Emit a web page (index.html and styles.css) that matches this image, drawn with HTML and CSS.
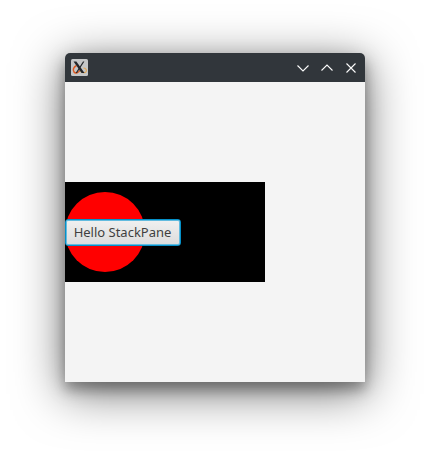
FILE: index.html
```html
<!DOCTYPE html>
<html lang="en">
<head>
<meta charset="utf-8">
<title>Hello StackPane</title>
<link rel="stylesheet" href="styles.css">
</head>
<body>
<div class="window">
  <header class="titlebar">
    <div class="app-icon">
      <svg width="17" height="17" viewBox="0 0 17 17">
        <rect width="17" height="17" rx="1.5" fill="#c4c6c7"/>
        <path d="M5.5 6.5C2.5 8 1.5 11 3 13C4.5 15 7.5 14 9.5 10.5" fill="none" stroke="#dd5a22" stroke-width="1.5"/>
        <path d="M9 11.5C10.5 14 14 14.5 15.2 12.5C16 11 14.5 9 12.5 9" fill="none" stroke="#e3a858" stroke-width="1.2"/>
        <path d="M2.5 2.5L5.4 2.5L13.5 14L10.6 14Z" fill="#23262a"/>
        <path d="M12 2.5L13.4 2.5L6 14L4.6 14Z" fill="#23262a"/>
      </svg>
    </div>
    <div class="controls">
      <svg width="12" height="12" viewBox="0 0 12 12"><path d="M.5 3.5L6 9L11.5 3.5"/></svg>
      <svg width="12" height="12" viewBox="0 0 12 12"><path d="M.5 8.5L6 3L11.5 8.5"/></svg>
      <svg width="12" height="12" viewBox="0 0 12 12"><path d="M1.5 1.5L10.5 10.5M10.5 1.5L1.5 10.5"/></svg>
    </div>
  </header>
  <main class="scene">
    <div class="stack">
      <div class="circle"></div>
      <button class="btn" type="button">Hello StackPane</button>
    </div>
  </main>
</div>
</body>
</html>
```
FILE: styles.css
```css
html, body {
  margin: 0;
  height: 100%;
  background: #fff;
  overflow: hidden;
}
body {
  padding: 53px 0 0 65px;
  box-sizing: border-box;
}
.window {
  width: 300px;
  border-radius: 5px 5px 0 0;
  box-shadow:
    0 10px 48px 2px rgba(0, 0, 0, .5),
    0 6px 20px rgba(0, 0, 0, .22),
    0 8px 12px rgba(0, 0, 0, .2);
}
.titlebar {
  height: 29px;
  background: #31363b;
  border-radius: 5px 5px 0 0;
  display: flex;
  align-items: center;
  justify-content: space-between;
  padding: 0 8px 0 6px;
  box-sizing: border-box;
}
.app-icon {
  display: flex;
}
.controls {
  display: flex;
  gap: 12px;
}
.controls svg {
  fill: none;
  stroke: #fcfcfc;
  stroke-width: 1.1;
}
.scene {
  height: 300px;
  background: #f4f4f4;
  display: flex;
  align-items: center;
}
.stack {
  width: 200px;
  height: 100px;
  background: #000;
  display: grid;
  align-items: center;
  justify-items: start;
}
.circle, .btn {
  grid-area: 1 / 1;
}
.circle {
  width: 80px;
  height: 80px;
  border-radius: 50%;
  background: #f00;
}
.btn {
  position: relative;
  width: 116px;
  height: 27px;
  margin: 0;
  padding: 0 1px 0 0;
  box-sizing: border-box;
  border: 1px solid #0590c8;
  border-radius: 3px;
  background: linear-gradient(#f0f0f0, #dcdcdc);
  box-shadow: inset 0 0 0 1px #62bbdf;
  color: #3f3f3f;
  font: 13px "Noto Sans", sans-serif;
  text-align: center;
}
```
